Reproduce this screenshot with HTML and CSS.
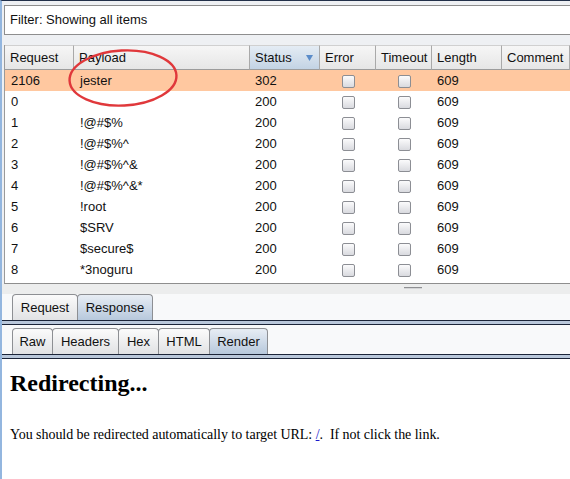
FILE: index.html
```html
<!DOCTYPE html>
<html>
<head>
<meta charset="utf-8">
<link rel="stylesheet" href="styles.css">
</head>
<body>
<div class="app">
  <div class="top">
    <div class="filter">Filter: Showing all items</div>
    <div class="table">
      <div class="row head">
        <div class="hc">Request</div>
        <div class="hc">Payload</div>
        <div class="hc sorted"><span>Status</span><svg class="arrow" width="7" height="6" viewBox="0 0 7 6"><polygon points="0,0 7,0 3.5,6" fill="#5b8cc9"/></svg></div>
        <div class="hc">Error</div>
        <div class="hc">Timeout</div>
        <div class="hc">Length</div>
        <div class="hc">Comment</div>
      </div>
      <div class="row sel"><div class="c">2106</div><div class="c">jester</div><div class="c">302</div><div class="c cb"><span class="box"></span></div><div class="c cb"><span class="box"></span></div><div class="c">609</div><div class="c"></div></div>
      <div class="row"><div class="c">0</div><div class="c"></div><div class="c">200</div><div class="c cb"><span class="box"></span></div><div class="c cb"><span class="box"></span></div><div class="c">609</div><div class="c"></div></div>
      <div class="row"><div class="c">1</div><div class="c">!@#$%</div><div class="c">200</div><div class="c cb"><span class="box"></span></div><div class="c cb"><span class="box"></span></div><div class="c">609</div><div class="c"></div></div>
      <div class="row"><div class="c">2</div><div class="c">!@#$%^</div><div class="c">200</div><div class="c cb"><span class="box"></span></div><div class="c cb"><span class="box"></span></div><div class="c">609</div><div class="c"></div></div>
      <div class="row"><div class="c">3</div><div class="c">!@#$%^&amp;</div><div class="c">200</div><div class="c cb"><span class="box"></span></div><div class="c cb"><span class="box"></span></div><div class="c">609</div><div class="c"></div></div>
      <div class="row"><div class="c">4</div><div class="c">!@#$%^&amp;*</div><div class="c">200</div><div class="c cb"><span class="box"></span></div><div class="c cb"><span class="box"></span></div><div class="c">609</div><div class="c"></div></div>
      <div class="row"><div class="c">5</div><div class="c">!root</div><div class="c">200</div><div class="c cb"><span class="box"></span></div><div class="c cb"><span class="box"></span></div><div class="c">609</div><div class="c"></div></div>
      <div class="row"><div class="c">6</div><div class="c">$SRV</div><div class="c">200</div><div class="c cb"><span class="box"></span></div><div class="c cb"><span class="box"></span></div><div class="c">609</div><div class="c"></div></div>
      <div class="row"><div class="c">7</div><div class="c">$secure$</div><div class="c">200</div><div class="c cb"><span class="box"></span></div><div class="c cb"><span class="box"></span></div><div class="c">609</div><div class="c"></div></div>
      <div class="row"><div class="c">8</div><div class="c">*3noguru</div><div class="c">200</div><div class="c cb"><span class="box"></span></div><div class="c cb"><span class="box"></span></div><div class="c">609</div><div class="c"></div></div>
      <div class="table-end"></div>
    </div>
  </div>
  <div class="splitter"><span class="grip"></span></div>
  <div class="tabarea">
    <div class="tabs">
      <div class="tab w-request">Request</div>
      <div class="tab active w-response">Response</div>
    </div>
    <div class="band"></div>
    <div class="tabs tabs2">
      <div class="tab w-raw">Raw</div>
      <div class="tab w-headers">Headers</div>
      <div class="tab w-hex">Hex</div>
      <div class="tab w-html">HTML</div>
      <div class="tab active w-render">Render</div>
    </div>
    <div class="band"></div>
  </div>
  <div class="render">
    <h1 class="title">Redirecting...</h1>
    <p class="msg">You should be redirected automatically to target URL: <a class="link" href="#">/</a>.&nbsp; If not click the link.</p>
  </div>
  <svg class="circle" width="116" height="62" viewBox="0 0 116 62"><ellipse cx="58" cy="30" rx="53.5" ry="27.5" fill="none" stroke="#e0383b" stroke-width="2.4" transform="rotate(-3 58 30)"/></svg>
</div>
</body>
</html>
```
FILE: styles.css
```css
html, body {
  margin: 0;
  padding: 0;
  background: #ffffff;
}
body {
  font-family: "Liberation Sans", Arial, sans-serif;
  font-size: 13px;
  color: #111;
  width: 570px;
  height: 479px;
  overflow: hidden;
}
.app {
  position: relative;
  height: 478px;
  border-top: 1px solid #22304a;
  border-left: 2px solid #93b6df;
  background: #eef0f3;
  display: flex;
  flex-direction: column;
}
.top {
  padding: 4px 0 0 2px;
}
.filter {
  height: 28px;
  line-height: 28px;
  border: 1px solid #8e8e8e;
  border-right: none;
  background: #fff;
  padding-left: 5px;
}
.table {
  margin-top: 10px;
  background: #fff;
  border-left: 1px solid #9a9a9a;
  border-bottom: 1px solid #8e8e8e;
}
.row {
  display: grid;
  grid-template-columns: 69px 176px 70px 56px 56px 70px 1fr;
  height: 21px;
}
.row.head {
  height: 25px;
}
.hc {
  box-sizing: border-box;
  height: 25px;
  line-height: 24px;
  padding-left: 5px;
  border-right: 1px solid #a9a9a9;
  border-bottom: 1px solid #9c9c9c;
  border-top: 1px solid #d0d0d0;
  background: linear-gradient(#f6f6f6, #e6e6e6);
  color: #111;
}
.hc.sorted {
  display: flex;
  justify-content: space-between;
  align-items: center;
  padding-right: 6px;
  background: linear-gradient(#e4ecf4, #c3d3e4);
}
.arrow {
  display: block;
}
.c {
  line-height: 22px;
  padding-left: 6px;
  white-space: nowrap;
}
.row .c:nth-child(3), .row .c:nth-child(6) {
  padding-left: 5px;
}
.row.sel {
  background: #ffc8a0;
}
.c.cb {
  display: flex;
  justify-content: center;
  align-items: center;
  padding-left: 0;
}
.box {
  display: block;
  box-sizing: border-box;
  width: 13px;
  height: 13px;
  border: 1px solid #8c8e94;
  border-radius: 2px;
  background: linear-gradient(#fbfbfc, #d9dadf);
}
.table-end {
  height: 3px;
}
.splitter {
  height: 10px;
  background: #eceded;
  display: flex;
  justify-content: center;
  padding-left: 254px;
}
.grip {
  display: block;
  width: 18px;
  height: 1px;
  margin-top: 3px;
  background: #8f9093;
  border-bottom: 1px solid #d5d6d8;
}
.tabarea {
  background: #f8f9fa;
}
.tabs {
  display: flex;
  padding-left: 10px;
  height: 26px;
}
.tabs2 {
  margin-top: 3px;
}
.tab {
  box-sizing: border-box;
  height: 26px;
  line-height: 25px;
  text-align: center;
  border: 1px solid #8d8f93;
  border-bottom: none;
  border-radius: 4px 4px 0 0;
  background: linear-gradient(#fbfbfb, #e1e2e4);
  margin-right: -1px;
  color: #111;
}
.tab.active {
  background: linear-gradient(#e7edf4, #b7c8dc);
}
.w-request { width: 66px; }
.w-response { width: 76px; }
.w-raw { width: 41px; }
.w-headers { width: 67px; }
.w-hex { width: 41px; }
.w-html { width: 52px; }
.w-render { width: 59px; }
.band {
  height: 3px;
  border-top: 1px solid #1b2438;
  border-bottom: 1px solid #1b2438;
  background: #b9c7da;
}
.render {
  flex: 1;
  background: #fff;
  padding-left: 8px;
  font-family: "Liberation Serif", "Times New Roman", serif;
  color: #000;
}
.title {
  margin: 10px 0 0 0;
  font-size: 24px;
  line-height: 28px;
  font-weight: bold;
}
.msg {
  margin: 30px 0 0 0;
  font-size: 14px;
  line-height: 16px;
  letter-spacing: -0.04px;
}
.link {
  color: #1a1acc;
  text-decoration: underline;
}
.circle {
  position: absolute;
  left: 63px;
  top: 47px;
}
```
